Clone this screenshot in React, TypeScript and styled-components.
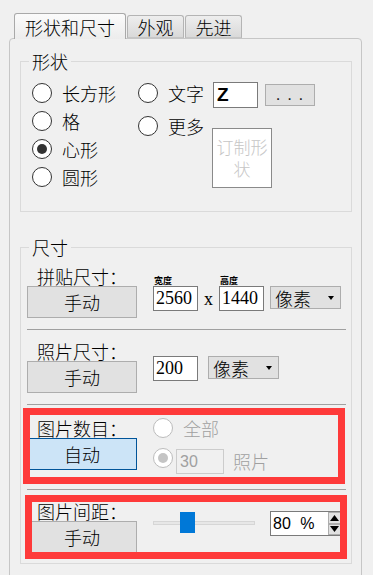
import React from 'react';
import styled, { createGlobalStyle } from 'styled-components';

const GlobalStyle = createGlobalStyle`
  html, body {
    margin: 0;
    padding: 0;
    background: #f0f0f0;
  }
  body {
    font-family: "Noto Sans CJK SC", "Noto Sans", sans-serif;
    font-size: 18px;
    font-weight: 300;
    line-height: 20px;
    color: #000;
  }
  * {
    box-sizing: border-box;
  }
`;

const Window = styled.div`
  width: 373px;
  height: 575px;
  overflow: hidden;
  padding-top: 13px;
`;

const TabStrip = styled.div`
  position: relative;
  z-index: 1;
  display: flex;
  align-items: flex-end;
  height: 25px;
  padding-left: 14px;
`;

const Tab = styled.div<{ $active?: boolean; $width: number }>`
  width: ${({ $width }) => $width}px;
  height: ${({ $active }) => ($active ? 26 : 23)}px;
  margin-bottom: ${({ $active }) => ($active ? -1 : 0)}px;
  margin-left: ${({ $active }) => ($active ? 0 : 1)}px;
  display: flex;
  align-items: center;
  justify-content: center;
  border: 1px solid ${({ $active }) => ($active ? '#a9a9a9' : '#b4b4b4')};
  border-bottom: ${({ $active }) => ($active ? 'none' : '1px solid #c6c6c6')};
  border-radius: 3px 3px 0 0;
  background: ${({ $active }) =>
    $active ? 'linear-gradient(#fbfbfb, #ececec)' : 'linear-gradient(#eeeeee, #d9d9d9)'};
  white-space: nowrap;
`;

const Panel = styled.div`
  height: 560px;
  margin: 0 11px 0 9px;
  padding: 13px 9px 0 10px;
  border: 1px solid #c6c6c6;
  border-radius: 4px 4px 0 0;
`;

const Group = styled.fieldset<{ $gap?: number }>`
  margin: ${({ $gap }) => $gap || 0}px 0 0 0;
  padding: 0;
  min-width: 0;
  border: 1px solid #dadada;
`;

const Legend = styled.legend`
  margin-left: 8px;
  padding: 0 3px;
  line-height: 18px;
`;

const ShapeBody = styled.div`
  display: flex;
  padding: 9px 0 20px 11px;
`;

const Column = styled.div<{ $width?: number }>`
  display: flex;
  flex-direction: column;
  width: ${({ $width }) => ($width ? `${$width}px` : 'auto')};
  flex: none;
`;

const RadioRow = styled.label<{ $height?: number; $disabled?: boolean; $mt?: number }>`
  display: flex;
  align-items: center;
  gap: 10px;
  height: ${({ $height }) => $height || 28}px;
  margin-top: ${({ $mt }) => $mt || 0}px;
  color: ${({ $disabled }) => ($disabled ? '#a0a0a0' : '#000')};
  white-space: nowrap;
`;

const RadioCircle = styled.span<{ $checked?: boolean; $disabled?: boolean }>`
  flex: none;
  width: 20px;
  height: 20px;
  border-radius: 50%;
  border: 1px solid ${({ $disabled }) => ($disabled ? '#bcbcbc' : '#333')};
  background: #fff;
  display: flex;
  align-items: center;
  justify-content: center;

  &::after {
    content: '';
    display: ${({ $checked }) => ($checked ? 'block' : 'none')};
    width: 10px;
    height: 10px;
    border-radius: 50%;
    background: ${({ $disabled }) => ($disabled ? '#c4c4c4' : '#333')};
  }
`;

const TextRow = styled.div`
  display: flex;
  align-items: center;
  gap: 7px;
  margin-top: 3px;
`;

const CharBox = styled.div`
  width: 45px;
  height: 26px;
  margin-left: 1px;
  border: 1px solid #7a7a7a;
  background: #fff;
  padding-left: 3px;
  font-family: "Liberation Sans", Arial, sans-serif;
  font-weight: 700;
  font-size: 19px;
  line-height: 24px;
`;

const DotsButton = styled.div`
  width: 50px;
  height: 22px;
  border: 1px solid #adadad;
  background: #e1e1e1;
  display: flex;
  align-items: center;
  justify-content: center;
  font-family: "Liberation Sans", Arial, sans-serif;
  font-size: 17px;
  font-weight: 400;
  letter-spacing: 1px;
  color: #222;
`;

const CustomShape = styled.div`
  width: 60px;
  height: 60px;
  margin-top: 20px;
  border: 1px solid #8a8a8a;
  background: #fff;
  color: #c6c6c6;
  display: flex;
  align-items: center;
  justify-content: center;
  text-align: center;
  line-height: 22px;
  padding: 0;
  font-size: 17px;
`;

const Section = styled.div<{ $top: number; $bottom: number }>`
  position: relative;
  display: flex;
  align-items: flex-start;
  gap: 16px;
  padding: ${({ $top, $bottom }) => `${$top}px 5px ${$bottom}px 6px`};
`;

const Side = styled.div`
  width: 110px;
  flex: none;
  display: flex;
  flex-direction: column;
`;

const SideLabel = styled.div`
  height: 20px;
  padding-left: 10px;
  white-space: nowrap;
`;

const Button = styled.div<{ $focused?: boolean }>`
  width: 110px;
  height: 32px;
  border: 1px solid ${({ $focused }) => ($focused ? '#005499' : '#adadad')};
  background: ${({ $focused }) => ($focused ? '#cce4f7' : '#e1e1e1')};
  display: flex;
  align-items: center;
  justify-content: center;
`;

const Divider = styled.div`
  height: 1px;
  margin: 0 5px 0 6px;
  background: #a0a0a0;
`;

const Right = styled.div<{ $top: number; $column?: boolean }>`
  display: flex;
  flex-direction: ${({ $column }) => ($column ? 'column' : 'row')};
  align-items: flex-start;
  padding-top: ${({ $top }) => $top}px;
`;

const Field = styled.div`
  display: flex;
  flex-direction: column;
`;

const Tiny = styled.span`
  height: 10px;
  padding-left: 1px;
  font-size: 9px;
  line-height: 10px;
  font-weight: 700;
`;

const NumberBox = styled.div`
  width: 45px;
  height: 25px;
  border: 1px solid #7a7a7a;
  background: #fff;
  padding-left: 2px;
  font-family: "Liberation Serif", "Times New Roman", serif;
  font-weight: 400;
  font-size: 18px;
  line-height: 23px;
`;

const Times = styled.span`
  width: 21px;
  height: 25px;
  margin-top: 10px;
  display: flex;
  align-items: center;
  justify-content: center;
  font-family: "Liberation Serif", "Times New Roman", serif;
  font-weight: 400;
  font-size: 18px;
`;

const Select = styled.div<{ $mt?: number; $ml?: number }>`
  width: 71px;
  height: 23px;
  margin-top: ${({ $mt }) => $mt || 0}px;
  margin-left: ${({ $ml }) => $ml || 0}px;
  border: 1px solid #adadad;
  background: #e1e1e1;
  display: flex;
  align-items: center;
  justify-content: space-between;
  padding: 0 6px 0 4px;
`;

const Caret = styled.span`
  width: 0;
  height: 0;
  border-left: 3.5px solid transparent;
  border-right: 3.5px solid transparent;
  border-top: 4px solid #000;
`;

const CountRow = styled.div`
  display: flex;
  align-items: flex-start;
  margin-top: 10px;
`;

const CountBox = styled.div`
  width: 48px;
  height: 25px;
  margin: 1px 0 0 3px;
  border: 1px solid #cccccc;
  background: #f0f0f0;
  color: #a0a0a0;
  padding-left: 3px;
  font-family: "Liberation Sans", Arial, sans-serif;
  font-weight: 400;
  font-size: 16px;
  line-height: 23px;
`;

const MutedText = styled.span`
  margin-left: 9px;
  line-height: 27px;
  color: #a0a0a0;
`;

const Slider = styled.div`
  position: relative;
  width: 102px;
  height: 21px;
  margin-top: 1px;
  display: flex;
  align-items: center;
`;

const Track = styled.div`
  flex: 1;
  height: 4px;
  border: 1px solid #d6d6d6;
  background: #e7e7e7;
`;

const Thumb = styled.div`
  position: absolute;
  top: 0;
  left: 27px;
  width: 15px;
  height: 21px;
  background: #0078d7;
`;

const Spin = styled.div`
  display: flex;
  width: 72px;
  height: 25px;
  margin-left: 15px;
  border: 1px solid #7a7a7a;
  background: #fff;
`;

const SpinText = styled.span`
  flex: 1;
  padding-left: 2px;
  font-family: "Liberation Sans", Arial, sans-serif;
  font-weight: 400;
  font-size: 16px;
  line-height: 23px;
  word-spacing: 5px;
`;

const SpinButtons = styled.div`
  width: 13px;
  display: flex;
  flex-direction: column;
`;

const SpinArrow = styled.div`
  flex: 1;
  border: 1px solid #adadad;
  background: #e1e1e1;
  display: flex;
  align-items: center;
  justify-content: center;
`;

const Highlight = styled.div<{ $top: number; $left: number; $width: number; $height: number }>`
  position: absolute;
  top: ${({ $top }) => $top}px;
  left: ${({ $left }) => $left}px;
  width: ${({ $width }) => $width}px;
  height: ${({ $height }) => $height}px;
  border: 7px solid #fe3a3a;
  pointer-events: none;
`;

const Radio: React.FC<{
  label: string;
  checked?: boolean;
  disabled?: boolean;
  height?: number;
  mt?: number;
}> = ({ label, checked, disabled, height, mt }) => (
  <RadioRow $height={height} $disabled={disabled} $mt={mt}>
    <RadioCircle $checked={checked} $disabled={disabled} />
    {label}
  </RadioRow>
);

const Arrow: React.FC<{ up?: boolean }> = ({ up }) => (
  <svg width="9" height="6" viewBox="0 0 9 6">
    <path d={up ? 'M0 6 L4.5 0 L9 6 Z' : 'M0 0 L4.5 6 L9 0 Z'} fill="#000" />
  </svg>
);

export default function App() {
  return (
    <Window>
      <GlobalStyle />
      <TabStrip>
        <Tab $active $width={112}>形状和尺寸</Tab>
        <Tab $width={57}>外观</Tab>
        <Tab $width={57}>先进</Tab>
      </TabStrip>
      <Panel>
        <Group>
          <Legend>形状</Legend>
          <ShapeBody>
            <Column $width={106}>
              <Radio label="长方形" />
              <Radio label="格" />
              <Radio label="心形" checked />
              <Radio label="圆形" />
            </Column>
            <Column $width={74}>
              <Radio label="文字" />
              <Radio label="更多" mt={5} />
            </Column>
            <Column>
              <TextRow>
                <CharBox>Z</CharBox>
                <DotsButton>. . .</DotsButton>
              </TextRow>
              <CustomShape>订制形状</CustomShape>
            </Column>
          </ShapeBody>
        </Group>

        <Group $gap={26}>
          <Legend>尺寸</Legend>
          <Section $top={10} $bottom={11}>
            <Side>
              <SideLabel>拼贴尺寸：</SideLabel>
              <Button>手动</Button>
            </Side>
            <Right $top={10}>
              <Field>
                <Tiny>宽度</Tiny>
                <NumberBox>2560</NumberBox>
              </Field>
              <Times>x</Times>
              <Field>
                <Tiny>高度</Tiny>
                <NumberBox>1440</NumberBox>
              </Field>
              <Select $mt={10} $ml={6}>
                像素
                <Caret />
              </Select>
            </Right>
          </Section>
          <Divider />
          <Section $top={11} $bottom={11}>
            <Side>
              <SideLabel>照片尺寸：</SideLabel>
              <Button>手动</Button>
            </Side>
            <Right $top={15}>
              <NumberBox>200</NumberBox>
              <Select $ml={10}>
                像素
                <Caret />
              </Select>
            </Right>
          </Section>
          <Divider />
          <Section $top={13} $bottom={14}>
            <Side>
              <SideLabel>图片数目：</SideLabel>
              <Button $focused>自动</Button>
            </Side>
            <Right $top={0} $column>
              <Radio label="全部" disabled height={20} />
              <CountRow>
                <RadioCircle $checked $disabled />
                <CountBox>30</CountBox>
                <MutedText>照片</MutedText>
              </CountRow>
            </Right>
            <Highlight $top={3} $left={2} $width={322} $height={76} />
          </Section>
          <Divider />
          <Section $top={11} $bottom={10}>
            <Side>
              <SideLabel>图片间距：</SideLabel>
              <Button>手动</Button>
            </Side>
            <Right $top={10}>
              <Slider>
                <Track />
                <Thumb />
              </Slider>
              <Spin>
                <SpinText>80 %</SpinText>
                <SpinButtons>
                  <SpinArrow>
                    <Arrow up />
                  </SpinArrow>
                  <SpinArrow>
                    <Arrow />
                  </SpinArrow>
                </SpinButtons>
              </Spin>
            </Right>
            <Highlight $top={5} $left={4} $width={322} $height={64} />
          </Section>
        </Group>
      </Panel>
    </Window>
  );
}
